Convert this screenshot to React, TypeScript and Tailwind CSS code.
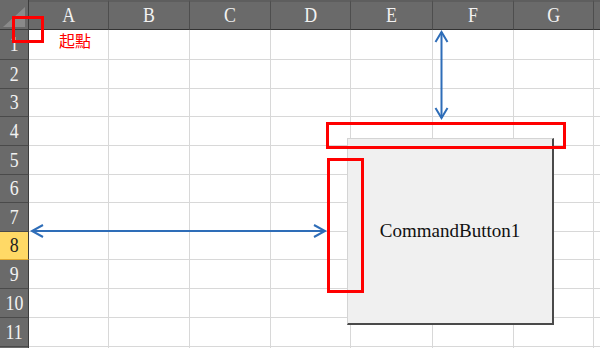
import React from "react";

const colWidths = [29, 80, 81, 81, 80, 82, 81, 80, 20];
const rowHeights = [30, 29, 28, 29, 29, 28, 29, 28, 29, 29, 29, 10];
const letters = ["A", "B", "C", "D", "E", "F", "G", ""];

export default function App() {
  const gridCols = colWidths.map((w) => `${w}px`).join(" ");
  const gridRows = ["30px", ...rowHeights.map((h) => `${h}px`)].join(" ");
  return (
    <div className="relative w-[600px] h-[348px] overflow-hidden bg-white" style={{ fontFamily: '"Liberation Serif", serif' }}>
      <div className="grid" style={{ gridTemplateColumns: gridCols, gridTemplateRows: gridRows }}>
        {/* corner */}
        <div className="relative bg-[#6a6a6a] border-r border-b border-[#3c3c3c]">
          <svg className="absolute left-0 top-0" width="28" height="29">
            <polygon points="3,27 25,27 25,7" fill="#8a8a8a" />
          </svg>
        </div>
        {letters.map((l, i) => (
          <div
            key={"h" + i}
            className="flex items-center justify-center bg-[#6a6a6a] border-r border-b border-r-[#4e4e4e] border-b-[#333333] border-t-2 border-t-[#5e5e5e] text-[#f2f2f2] text-[21px] leading-none"
          >
            <span className="inline-block scale-x-[0.85]">{l}</span>
          </div>
        ))}
        {rowHeights.map((_, r) => {
          const sel = r === 7;
          return (
            <React.Fragment key={"r" + r}>
              <div
                className={
                  sel
                    ? "flex items-center justify-center bg-[#ffd966] border-r border-b border-r-[#3c3c3c] border-b-[#e0a830] text-[#222] text-[21px] leading-none"
                    : "flex items-center justify-center bg-[#6a6a6a] border-r border-b border-r-[#3c3c3c] border-b-[#4a4a4a] text-[#f2f2f2] text-[21px] leading-none"
                }
              >
                <span className="inline-block scale-x-[0.85]">{r < 11 ? r + 1 : ""}</span>
              </div>
              {letters.map((_, c) => (
                <div key={"c" + r + "-" + c} className="border-r border-b border-[#d8d8d8]">
                  {r === 0 && c === 0 ? (
                    <div
                      className="pl-[30px] pt-[1px] text-[16px] leading-[18px] text-[#ff0000]"
                      style={{ fontFamily: '"Noto Sans CJK TC", sans-serif' }}
                    >
                      起點
                    </div>
                  ) : null}
                </div>
              ))}
            </React.Fragment>
          );
        })}
      </div>

      {/* command button */}
      <div className="absolute left-[347px] top-[138px] w-[207px] h-[187px] bg-[#f0f0f0] border-t border-l border-[#d4d4d4] border-r-2 border-b-2 border-r-[#4a4a4a] border-b-[#4a4a4a] flex items-center justify-center text-[19px] text-[#111]">
        CommandButton1
      </div>

      {/* red boxes */}
      <div className="absolute left-[12px] top-[16px] w-[32px] h-[27px] border-[3px] border-[#ff0000]" />
      <div className="absolute left-[326px] top-[122px] w-[240px] h-[27px] border-[3px] border-[#ff0000]" />
      <div className="absolute left-[327px] top-[158px] w-[37px] h-[135px] border-[3px] border-[#ff0000]" />

      {/* arrows */}
      <svg className="absolute left-0 top-0 pointer-events-none" width="600" height="348">
        <g stroke="#2e6db8" strokeWidth="2" fill="none">
          <line x1="441.5" y1="32" x2="441.5" y2="118" />
          <polyline points="435.5,42 441.5,32 447.5,42" />
          <polyline points="435.5,108 441.5,118 447.5,108" />
          <line x1="32" y1="231" x2="325" y2="231" />
          <polyline points="43,225 32,231 43,237" />
          <polyline points="314,225 325,231 314,237" />
        </g>
      </svg>
    </div>
  );
}
